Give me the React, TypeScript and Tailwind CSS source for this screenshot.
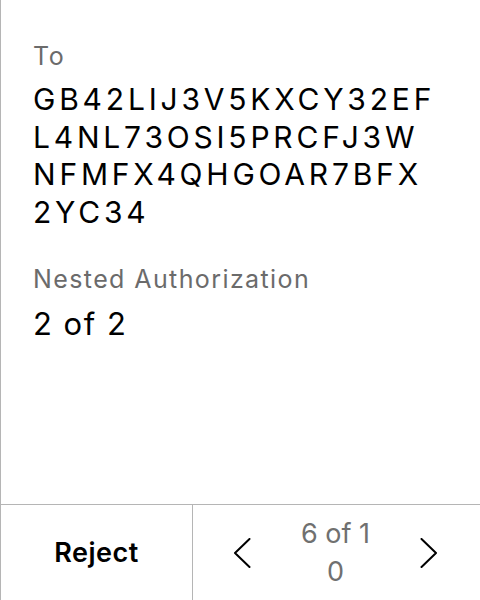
function Chevron({ dir }: { dir: "left" | "right" }) {
  return (
    <svg width="18" height="30" viewBox="0 0 18 30" fill="none" className="shrink-0">
      <path
        d={dir === "left" ? "M16.5 1 L2 15 L16.5 29" : "M1.5 1 L16 15 L1.5 29"}
        stroke="#000"
        strokeWidth="2"
        strokeLinecap="round"
        strokeLinejoin="round"
      />
    </svg>
  );
}

const addressLines = ["GB42LIJ3V5KXCY32EF", "L4NL73OSI5PRCFJ3W", "NFMFX4QHGOAR7BFX", "2YC34"];

export default function App() {
  return (
    <div
      className="w-[480px] h-[600px] bg-white flex flex-col border-l border-[#b5b5b5] text-black"
      style={{ fontFamily: "Inter, 'Noto Sans', sans-serif" }}
    >
      {/* Details */}
      <div className="flex-1 pl-[32px] pr-4 pt-[41px]">
        <div className="text-[25px] leading-[30px] tracking-[1.5px] text-[#6b6b6b]">To</div>
        <div className="mt-[10px] text-[30px] leading-[37.5px] tracking-[3.8px]">
          {addressLines.map(line => (
            <div key={line}>{line}</div>
          ))}
        </div>
        <div className="mt-[33px] text-[25px] leading-[30px] tracking-[1.4px] text-[#6b6b6b]">
          Nested Authorization
        </div>
        <div className="mt-[12px] text-[31px] leading-[36px] tracking-[1.5px]">2 of 2</div>
      </div>

      {/* Footer */}
      <div className="h-[96px] border-t border-[#b5b5b5] flex">
        <div className="w-[192px] border-r border-[#b5b5b5] flex items-center justify-center">
          <span className="text-[27px] font-semibold leading-none tracking-[0.5px]">Reject</span>
        </div>
        <div className="flex-1 flex items-center justify-between pl-[40px] pr-[42px]">
          <Chevron dir="left" />
          <div className="w-[80px] text-center text-[27px] leading-[38px] text-[#707070]">
            6 of 1
            <br />0
          </div>
          <Chevron dir="right" />
        </div>
      </div>
    </div>
  );
}
